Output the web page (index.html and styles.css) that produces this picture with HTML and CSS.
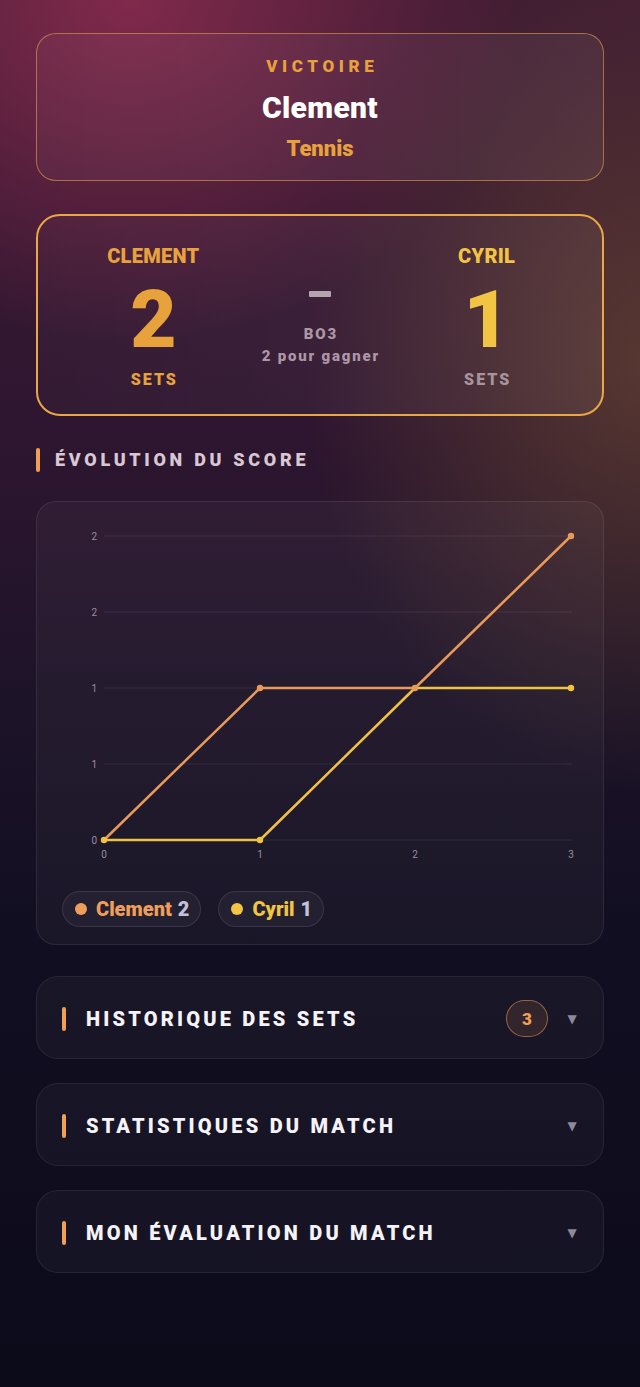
FILE: index.html
```html
<!DOCTYPE html>
<html lang="fr">
<head>
<meta charset="utf-8">
<title>Match</title>
<link rel="stylesheet" href="styles.css">
</head>
<body>
<div class="page">
  <section class="result-card">
    <div class="result-label">VICTOIRE</div>
    <div class="result-name">Clement</div>
    <div class="result-sport">Tennis</div>
  </section>

  <section class="score-card">
    <div class="player p1">
      <div class="player-name">CLEMENT</div>
      <div class="player-score">2</div>
      <div class="player-unit">SETS</div>
    </div>
    <div class="score-mid">
      <div class="vs-dash"></div>
      <div class="format format-first">BO3</div>
      <div class="format">2 pour gagner</div>
    </div>
    <div class="player p2">
      <div class="player-name">CYRIL</div>
      <div class="player-score">1</div>
      <div class="player-unit">SETS</div>
    </div>
  </section>

  <h2 class="section-title"><span class="accent-bar"></span>ÉVOLUTION DU SCORE</h2>

  <section class="chart-card">
    <svg class="chart" width="516" height="346" viewBox="0 0 516 346">
      <g class="grid">
        <line x1="42" y1="16" x2="510" y2="16"/>
        <line x1="42" y1="92" x2="510" y2="92"/>
        <line x1="42" y1="168" x2="510" y2="168"/>
        <line x1="42" y1="244" x2="510" y2="244"/>
        <line x1="42" y1="320" x2="510" y2="320"/>
      </g>
      <g class="ylabels">
        <text x="35" y="19.5">2</text>
        <text x="35" y="95.5">2</text>
        <text x="35" y="171.5">1</text>
        <text x="35" y="247.5">1</text>
        <text x="35" y="323.5">0</text>
      </g>
      <g class="xlabels">
        <text x="42" y="338">0</text>
        <text x="198" y="338">1</text>
        <text x="353" y="338">2</text>
        <text x="509" y="338">3</text>
      </g>
      <polyline class="line-cyril" points="42,320 198,320 353,168 509,168"/>
      <polyline class="line-clement" points="42,320 198,168 353,168 509,16"/>
      <g class="pts-clement">
        <circle cx="198" cy="168" r="3.2"/>
        <circle cx="353" cy="168" r="3.2"/>
        <circle cx="509" cy="16" r="3.2"/>
      </g>
      <g class="pts-cyril">
        <circle cx="42" cy="320" r="3.2"/>
        <circle cx="198" cy="320" r="3.2"/>
        <circle cx="509" cy="168" r="3.2"/>
      </g>
    </svg>
    <div class="legend">
      <span class="chip"><span class="dot dot-clement"></span><span class="chip-name name-clement">Clement</span><span class="chip-val">2</span></span>
      <span class="chip"><span class="dot dot-cyril"></span><span class="chip-name name-cyril">Cyril</span><span class="chip-val">1</span></span>
    </div>
  </section>

  <div class="accordion acc-first">
    <span class="acc-bar"></span>
    <span class="acc-title">HISTORIQUE DES SETS</span>
    <span class="badge">3</span>
    <span class="chev">▼</span>
  </div>
  <div class="accordion">
    <span class="acc-bar"></span>
    <span class="acc-title">STATISTIQUES DU MATCH</span>
    <span class="chev">▼</span>
  </div>
  <div class="accordion">
    <span class="acc-bar"></span>
    <span class="acc-title">MON ÉVALUATION DU MATCH</span>
    <span class="chev">▼</span>
  </div>
</div>
</body>
</html>
```

FILE: styles.css
```css
* { box-sizing: border-box; }

html, body {
  margin: 0;
  padding: 0;
}

body {
  min-height: 1387px;
  font-family: Roboto, "Liberation Sans", Arial, sans-serif;
  color: #fff;
  background-color: #0c0b1a;
  background-image:
    radial-gradient(520px 460px at 130px 0px, rgba(140, 44, 80, 0.85), rgba(140, 44, 80, 0) 75%),
    radial-gradient(480px 600px at 650px 360px, rgba(125, 88, 48, 0.5), rgba(125, 88, 48, 0) 72%),
    linear-gradient(to bottom, #3f1b33 0px, #2f1630 420px, #1d1328 700px, #110e21 950px, #0c0b1a 1387px);
  background-repeat: no-repeat;
}

.page {
  display: flex;
  flex-direction: column;
  padding: 33px 36px 0;
}

/* Result card */
.result-card {
  height: 148px;
  border: 1px solid rgba(226, 160, 72, 0.6);
  border-radius: 20px;
  padding-top: 21px;
  text-align: center;
  background: linear-gradient(90deg, rgba(255, 255, 255, 0.035), rgba(255, 255, 255, 0.06));
}

.result-label {
  font-size: 17px;
  font-weight: 900;
  letter-spacing: 4.6px;
  padding-left: 4.6px;
  line-height: 22px;
  color: #e8a23c;
}

.result-name {
  margin-top: 13px;
  font-size: 30px;
  font-weight: 900;
  line-height: 36px;
  letter-spacing: 0.3px;
  color: #ffffff;
}

.result-sport {
  margin-top: 10px;
  font-size: 22px;
  font-weight: 900;
  line-height: 26px;
  color: #e8a23c;
}

/* Score card */
.score-card {
  margin-top: 33px;
  border: 2px solid #e9a846;
  border-radius: 24px;
  padding: 29px 32px 24px;
  display: grid;
  grid-template-columns: repeat(3, 1fr);
  text-align: center;
  background: linear-gradient(90deg, rgba(255, 255, 255, 0.02), rgba(255, 255, 255, 0.05));
}

.player-name {
  font-size: 20px;
  font-weight: 900;
  letter-spacing: 0.3px;
  line-height: 22px;
}

.player-score {
  margin-top: 13px;
  font-size: 80px;
  font-weight: 900;
  line-height: 80px;
}

.player-unit {
  margin-top: 10px;
  font-size: 16px;
  font-weight: 900;
  letter-spacing: 2px;
  padding-left: 2px;
  line-height: 20px;
}

.p1 { color: #e8a23c; }
.p2 .player-name,
.p2 .player-score { color: #f2c443; }
.p2 .player-unit { color: #a8949e; }

.score-mid {
  display: flex;
  flex-direction: column;
  align-items: center;
}

.vs-dash {
  width: 22px;
  height: 6px;
  margin-top: 46px;
  border-radius: 1px;
  background: #b5a3ae;
}

.format {
  font-size: 15px;
  font-weight: 900;
  letter-spacing: 1.8px;
  padding-left: 1.8px;
  line-height: 22px;
  color: #ad97a5;
}

.format-first { margin-top: 26px; }

/* Section title */
.section-title {
  margin: 32px 0 0;
  display: flex;
  align-items: center;
  gap: 15px;
  font-size: 18px;
  font-weight: 900;
  letter-spacing: 3.7px;
  line-height: 24px;
  color: #d8c7d3;
}

.accent-bar {
  width: 4px;
  height: 24px;
  border-radius: 2px;
  background: #f0a055;
  flex: none;
}

/* Chart card */
.chart-card {
  margin-top: 29px;
  border: 1px solid rgba(255, 255, 255, 0.08);
  border-radius: 20px;
  padding: 18px 25px 17px;
  background: rgba(255, 255, 255, 0.035);
}

.chart {
  display: block;
}

.grid line {
  stroke: rgba(255, 255, 255, 0.08);
  stroke-width: 1;
}

.ylabels text {
  font-family: Roboto, "Liberation Sans", sans-serif;
  font-size: 10px;
  fill: #9c8c9e;
  text-anchor: end;
}

.xlabels text {
  font-family: Roboto, "Liberation Sans", sans-serif;
  font-size: 10px;
  fill: #9c8c9e;
  text-anchor: middle;
}

.line-clement {
  fill: none;
  stroke: #e99a58;
  stroke-width: 2.5;
  stroke-linejoin: round;
}

.line-cyril {
  fill: none;
  stroke: #f0c242;
  stroke-width: 2.5;
  stroke-linejoin: round;
}

.pts-clement circle { fill: #e99a58; }
.pts-cyril circle { fill: #f0c242; }

.legend {
  margin-top: 25px;
  display: flex;
  gap: 17px;
}

.chip {
  height: 36px;
  display: inline-flex;
  align-items: center;
  padding: 0 11px 0 12px;
  border: 1px solid rgba(255, 255, 255, 0.1);
  border-radius: 18px;
  background: rgba(255, 255, 255, 0.04);
  font-size: 20px;
  font-weight: 900;
}

.dot {
  width: 12px;
  height: 12px;
  border-radius: 50%;
  margin-right: 9px;
}

.dot-clement { background: #ee9e58; }
.dot-cyril { background: #f2c443; }

.name-clement { color: #ee9e58; }
.name-cyril { color: #f2c443; }

.chip-val {
  margin-left: 6px;
  color: #c4c0da;
}

/* Accordions */
.accordion {
  height: 83px;
  margin-top: 24px;
  display: flex;
  align-items: center;
  padding: 2px 25px 0;
  border: 1px solid rgba(255, 255, 255, 0.07);
  border-radius: 22px;
  background: rgba(255, 255, 255, 0.035);
}

.acc-first { margin-top: 31px; }

.acc-bar {
  width: 4px;
  height: 24px;
  border-radius: 2px;
  background: #f0a055;
  margin-right: 20px;
  flex: none;
}

.acc-title {
  flex: 1;
  font-size: 20px;
  font-weight: 900;
  letter-spacing: 3.2px;
  color: #f5f3f8;
}

.badge {
  width: 42px;
  height: 37px;
  margin-right: 18px;
  display: flex;
  align-items: center;
  justify-content: center;
  border: 1px solid rgba(236, 150, 80, 0.55);
  border-radius: 19px;
  background: rgba(236, 150, 80, 0.12);
  color: #f0a055;
  font-size: 17px;
  font-weight: 900;
}

.chev {
  width: 12px;
  font-family: "DejaVu Sans", sans-serif;
  font-size: 12px;
  color: #8d8a9c;
  text-align: center;
}
```
